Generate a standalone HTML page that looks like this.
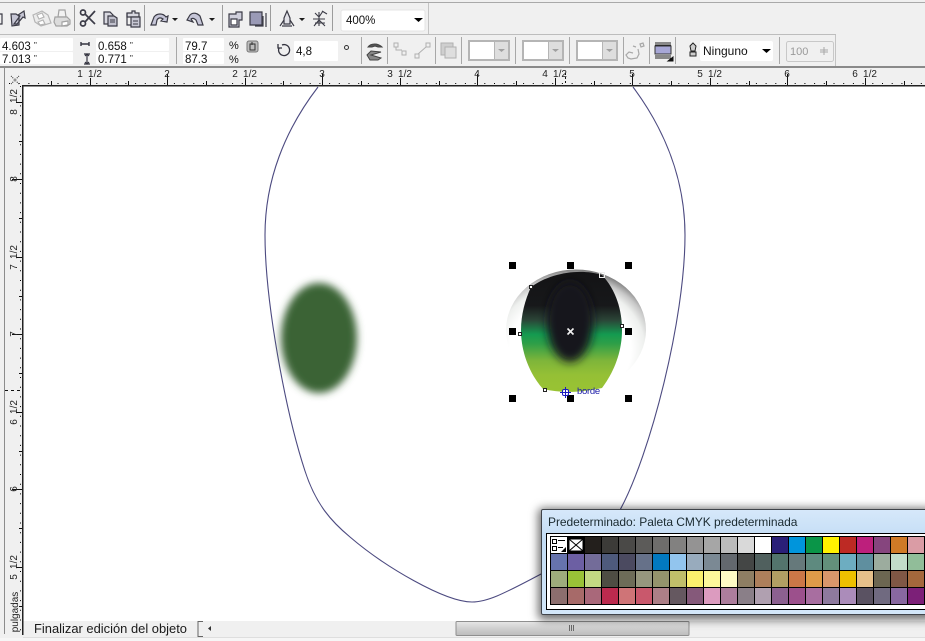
<!DOCTYPE html>
<html><head><meta charset="utf-8">
<style>
html,body{margin:0;padding:0;background:#f0f0f0}
#w{position:relative;width:925px;height:641px;overflow:hidden;background:#f0f0f0;font-family:"Liberation Sans",sans-serif}
svg{position:absolute;left:0;top:0}
#pal{position:absolute;left:541px;top:509px;width:390px;height:106px;border:1px solid #40444a;box-sizing:border-box;background:linear-gradient(#d6e8fa,#c2dcf5 30%,#d3e7f9);box-shadow:0 2px 9px 3px rgba(0,0,0,.55);border-radius:2px}
#title{position:absolute;left:6px;top:5px;font-size:12px;color:#1a2a30;white-space:nowrap;letter-spacing:-.05px}
#box{position:absolute;left:4px;top:23px;width:400px;height:77px;background:#fff;border:1px solid #000;box-sizing:border-box}
#grid{position:absolute;left:3px;top:2px;display:grid;grid-template-columns:repeat(22,16px);grid-auto-rows:16px;gap:1px;background:#000;padding:1px;width:400px}
#grid i{display:block;position:relative}
</style></head><body><div id="w">
<svg width="925" height="641" viewBox="0 0 925 641" font-family="Liberation Sans, sans-serif">
<defs>
<filter id="b3" x="-30%" y="-30%" width="160%" height="160%"><feGaussianBlur stdDeviation="4"/></filter>
<filter id="b5" x="-50%" y="-50%" width="200%" height="200%"><feGaussianBlur stdDeviation="4.500"/></filter>
<radialGradient id="scl" cx=".46" cy=".66" r=".7"><stop offset="0" stop-color="#fff"/><stop offset=".62" stop-color="#fff"/><stop offset=".76" stop-color="#eef0ee"/><stop offset=".85" stop-color="#c8c8c8"/><stop offset=".94" stop-color="#808080"/><stop offset="1" stop-color="#444"/></radialGradient>
<linearGradient id="iris" x1="0" y1="0" x2="0" y2="1"><stop offset="0" stop-color="#131315"/><stop offset=".28" stop-color="#17181a"/><stop offset=".4" stop-color="#2b4437"/><stop offset=".52" stop-color="#149a50"/><stop offset=".6" stop-color="#2f9f48"/><stop offset=".74" stop-color="#7eb53a"/><stop offset=".86" stop-color="#95c035"/><stop offset="1" stop-color="#99c333"/></linearGradient>
<linearGradient id="thumb" x1="0" y1="0" x2="0" y2="1"><stop offset="0" stop-color="#e6e6e6"/><stop offset=".5" stop-color="#cfcfcf"/><stop offset="1" stop-color="#bcbcbc"/></linearGradient>
</defs>

<!-- top bars -->
<rect x="0" y="2" width="925" height="1" fill="#a9a9a9"/>
<rect x="0" y="34" width="836" height="1" fill="#bdbdbd"/>
<rect x="428" y="3" width="1" height="31" fill="#c4c4c4"/>
<rect x="835" y="35" width="1" height="31" fill="#c4c4c4"/>
<rect x="0" y="66" width="925" height="2" fill="#8a8a8a"/>

<!-- toolbar 1 separators -->
<g fill="#9c9c9c"><rect x="74" y="5" width="1" height="26"/><rect x="144" y="5" width="1" height="26"/><rect x="222" y="5" width="1" height="26"/><rect x="270" y="5" width="1" height="26"/><rect x="332" y="5" width="1" height="26"/></g>

<!-- toolbar 1 icons -->
<g fill="none" stroke="#3b3b46" stroke-width="1.200">
<path d="M0 14h2v10H0"/>
<path d="M11 14l5 0 3 2 0 9-7 1zM14 24l6-8-2-1 6-4 1 7-2-1-6 7z" fill="#c6c6d4"/>
<g stroke="#b5b5b5" fill="#ececec"><path d="M33 15l9-4 6 4 3 8-10 3-6-4z"/><path d="M37 15l5-2 2 4-5 2zM38 22l5-2 2 4-5 1z" fill="#fff"/></g>
<g stroke="#a2a2a2" fill="#dcdcdc"><path d="M59 10h6l1 7h-8z" fill="#f2f2f2"/><path d="M55 17h12l3 3v4l-3 2-11 0-2-4z"/><path d="M62 22l6-1v4l-6 1z" fill="#fff"/></g>
<g stroke="#3c3c48" stroke-width="1.700"><path d="M85 14l10 10M85 22l10-11"/><circle cx="83" cy="12.500" r="2.500"/><circle cx="83" cy="23.500" r="2.500"/></g>
<path d="M104 12h6l3 3v9h-9z" fill="#d8d8e0"/><path d="M108 16h6l3 2v8h-9z" fill="#c0c0cc"/><path d="M110 20h5M110 22h5" stroke-width="1"/>
<path d="M127 13h5v-2h3v2h4v4h-12z" fill="#d8d8e0"/><path d="M127 13v12h5"/><path d="M131 17h9v10h-9z" fill="#c8c8d4"/><path d="M133 21h5M133 24h5" stroke-width="1"/>
<path d="M151 25L154 17C157 13 163 13 166 17L168 16L167 22L161 21L163 19C160 17 158 18 157 20L156 25Z" fill="#c6c6d8"/>
<path d="M187 20L190 15C193 12 197 13 200 16L203 25L198 25L196 20C194 18 192 18 191 19L193 22Z" fill="#c6c6d8"/>
<path d="M229 14h7v-2h6v8h-3v7h-10z" fill="#cfcfdc"/><path d="M231 19h6v6h-6z" fill="#fff"/>
<path d="M250 12h12v13h-12z" fill="#9a9ab6"/><path d="M263 16v10h-8M266 13l0 14"/>
<path d="M284 24l0-6 3-7 3 7 0 6zM280 26l4-6M294 26l-4-6M282 26h10" fill="#e2e2e8"/>
<path d="M315 13l4 4 4-6M313 19h12M319 12v14M314 26l5-6 6 6M322 11l5 3M315 23h10" stroke-width="1.100"/>
</g>
<g fill="#1c1c1c"><path d="M172 18h6l-3 3zM209 18h6l-3 3zM299 18h6l-3 3z"/></g>

<!-- zoom combo -->
<rect x="341" y="10" width="84" height="21" rx="2" fill="#fff" stroke="#e4e4e4"/>
<text x="346" y="24" font-size="11.500" fill="#111">400%</text>
<path d="M414 18h9l-4.500 4z" fill="#000"/>

<!-- toolbar 2 fields -->
<g fill="#fff"><rect x="0" y="38" width="73" height="13" rx="1"/><rect x="0" y="52" width="73" height="12" rx="1"/><rect x="96" y="38" width="73" height="13" rx="1"/><rect x="96" y="52" width="73" height="12" rx="1"/><rect x="183" y="38" width="41" height="13" rx="1"/><rect x="183" y="52" width="41" height="12" rx="1"/><rect x="294" y="41" width="44" height="20" rx="1"/><rect x="700" y="41" width="73" height="20" rx="2"/></g>
<g font-size="11.500" fill="#111">
<text x="2" y="50">4.603 <tspan font-size="8" dy="-2">"</tspan></text>
<text x="2" y="63">7.013 <tspan font-size="8" dy="-2">"</tspan></text>
<text x="98" y="50">0.658 <tspan font-size="8" dy="-2">"</tspan></text>
<text x="98" y="63">0.771 <tspan font-size="8" dy="-2">"</tspan></text>
<text x="185" y="50">79.7</text><text x="185" y="63">87.3</text>
<text x="229" y="49" font-size="11">%</text><text x="229" y="63" font-size="11">%</text>
<text x="296" y="55">4,8</text>
<text x="703" y="55" font-size="12">Ninguno</text>
</g>
<circle cx="346.500" cy="47.500" r="2" fill="none" stroke="#333"/>
<path d="M762 49h9l-4.500 4z" fill="#000"/>
<g fill="#a8a8a8"><rect x="176" y="37" width="1" height="27"/><rect x="361" y="37" width="1" height="27"/><rect x="387" y="37" width="1" height="27"/><rect x="435" y="37" width="1" height="27"/><rect x="461" y="37" width="1" height="27"/><rect x="515" y="37" width="1" height="27"/><rect x="569" y="37" width="1" height="27"/><rect x="623" y="37" width="1" height="27"/><rect x="649" y="37" width="1" height="27"/><rect x="675" y="37" width="1" height="27"/><rect x="779" y="37" width="1" height="27"/></g>

<!-- toolbar 2 icons -->
<g fill="none" stroke="#33333f" stroke-width="1">
<path d="M81 44h8M81 42v4M89 42v4" stroke-width="1.400"/>
<path d="M87 54v10M84 54h6M84 64h6M85 56l2-2 2 2M85 62l2 2 2-2" stroke-width="1.200"/>
<rect x="247" y="41" width="11" height="11" rx="2" fill="#bdbdbd" stroke="#777"/><path d="M250 44h5v6h-5zM252 42v3" stroke="#333"/>
<path d="M279 48a5.500 5.500 0 1 0 3-3M278 44v4h4" stroke-width="1.300"/>
<path d="M368 47c3-4 10-4 14 0l-4 0-3-1-3 1z" fill="#555" stroke="#444"/><path d="M381 52l-10 3 10 3-3 2h-8l-3-5 4-4z" fill="#888" stroke="#444"/>
<g stroke="#b0b0b0"><rect x="394" y="43" width="4" height="4"/><rect x="402" y="51" width="4" height="4"/><path d="M396 47v3h6"/><rect x="415" y="54" width="4" height="4"/><rect x="426" y="43" width="4" height="4"/><path d="M418 54l8-7"/></g>
<rect x="441" y="43" width="12" height="12" fill="#cfcfcf" stroke="#b0b0b0"/><rect x="445" y="47" width="11" height="11" fill="#dedede" stroke="#b0b0b0"/>
<path d="M633 53l-4-1-3 3 2 3 3 1 6-1 2-4-1-5M633 46l3 1M640 44l3-1 1 3-3 1z" stroke="#a8a8a8" stroke-width="1.200"/>
<path d="M655 43h16M655 45h16" stroke="#222"/><rect x="655" y="46" width="16" height="8" fill="#a7a7d6" stroke="#333"/><path d="M655 56h16M655 58h16" stroke="#222"/><path d="M668 61l5-4v4z" fill="#111" stroke="#111"/>
<path d="M690 46l3-3 3 3-1 5-4 0zM690 52h6v4h-6z" stroke="#222" fill="#ccc"/>
</g>

<!-- colour selectors -->
<g>
<rect x="468" y="40" width="42" height="21" fill="#b5b5b5"/><rect x="470" y="42" width="24" height="17" fill="#fff"/><rect x="495" y="42" width="13" height="17" fill="#dedede"/><path d="M498 49h7l-3.500 3z" fill="#a0a0a0"/>
<rect x="522" y="40" width="42" height="21" fill="#b5b5b5"/><rect x="524" y="42" width="24" height="17" fill="#fff"/><rect x="549" y="42" width="13" height="17" fill="#dedede"/><path d="M552 49h7l-3.500 3z" fill="#a0a0a0"/>
<rect x="576" y="40" width="42" height="21" fill="#b5b5b5"/><rect x="578" y="42" width="24" height="17" fill="#fff"/><rect x="603" y="42" width="13" height="17" fill="#dedede"/><path d="M606 49h7l-3.500 3z" fill="#a0a0a0"/>
</g>
<rect x="786.500" y="41.500" width="47" height="20" rx="2" fill="#f0f0f0" stroke="#c8c8c8"/>
<text x="790" y="55" font-size="11" fill="#9a9a9a">100</text>
<path d="M820 50h8M824 47v8M820 52h8" stroke="#a8a8a8" fill="none"/>

<!-- ruler H -->
<rect x="23" y="68" width="902" height="17" fill="#f0f0f0"/>
<rect x="4" y="68" width="1" height="566" fill="#8c8c8c"/>
<path d="M8 84.500H925" stroke="#000" stroke-width="1" stroke-dasharray="1 8.700" stroke-dashoffset="-1" transform="translate(0,-1)"/>
<g stroke="#111" stroke-width="1" fill="none">
<path d="M90.500 78v7M167.500 74v11M245.500 78v7M322.500 74v11M400.500 78v7M477.500 74v11M555.500 78v7M632.500 74v11M710.500 78v7M787.500 74v11M865.500 78v7"/>
<path d="M51.500 81v4M128.500 81v4M206.500 81v4M283.500 81v4M361.500 81v4M439.500 81v4M516.500 81v4M594.500 81v4M671.500 81v4M749.500 81v4M826.500 81v4M904.500 81v4"/>
<path d="M565.500 73v12" stroke-dasharray="2 2"/>
</g>
<g font-size="10" fill="#222" text-anchor="middle">
<text x="80" y="77">1</text><text x="95" y="77">1/2</text>
<text x="167" y="77">2</text>
<text x="235" y="77">2</text><text x="250" y="77">1/2</text>
<text x="322" y="77">3</text>
<text x="390" y="77">3</text><text x="405" y="77">1/2</text>
<text x="477" y="77">4</text>
<text x="545" y="77">4</text><text x="560" y="77">1/2</text>
<text x="632" y="77">5</text>
<text x="700" y="77">5</text><text x="715" y="77">1/2</text>
<text x="787" y="77">6</text>
<text x="855" y="77">6</text><text x="870" y="77">1/2</text>
</g>
<!-- origin icon -->
<path d="M11 76l4 4M19 76l-4 4M11 84l4-4M19 84l-4-4" stroke="#333" stroke-dasharray="1 1" fill="none"/>

<!-- ruler V -->
<path d="M20.500 86V634" stroke="#000" stroke-dasharray="1 8.700" fill="none"/>
<g stroke="#111" fill="none">
<path d="M16 102.500h7M12 179.500h11M16 257.500h7M12 334.500h11M16 412.500h7M12 489.500h11M16 567.500h7"/>
<path d="M19 141.500h4M19 218.500h4M19 296.500h4M19 373.500h4M19 451.500h4M19 528.500h4M19 606.500h4"/>
<path d="M5 390.500h18" stroke-dasharray="3 3"/>
</g>
<g font-size="10" fill="#222" text-anchor="middle">
<text transform="translate(17,96) rotate(-90)">1/2</text><text transform="translate(17,112) rotate(-90)">8</text>
<text transform="translate(17,179) rotate(-90)">8</text>
<text transform="translate(17,252) rotate(-90)">1/2</text><text transform="translate(17,267) rotate(-90)">7</text>
<text transform="translate(17,334) rotate(-90)">7</text>
<text transform="translate(17,407) rotate(-90)">1/2</text><text transform="translate(17,422) rotate(-90)">6</text>
<text transform="translate(17,489) rotate(-90)">6</text>
<text transform="translate(17,562) rotate(-90)">1/2</text><text transform="translate(17,577) rotate(-90)">5</text>
<text transform="translate(18,612) rotate(-90)" font-size="10">pulgadas</text>
</g>

<!-- canvas -->
<rect x="23" y="86" width="902" height="535" fill="#fff"/>
<rect x="22" y="85" width="903" height="1.500" fill="#222"/>
<rect x="22" y="85" width="1.500" height="550" fill="#222"/>

<!-- face -->
<g fill="none" stroke="#4c4a80" stroke-width="1.100">
<path d="M318 87C285 130 265 180 265 235C265 300 285 410 305 471C316 505 332 522 350 537C385 567 445 602 472 602C490 602 510 590 545 572"/>
<path d="M620 510C650 455 685 320 685 235C685 180 665 130 633 87"/>
</g>

<!-- left oval -->
<ellipse cx="319" cy="338" rx="38" ry="55" fill="#3b6336" filter="url(#b3)"/>

<!-- eye -->
<ellipse cx="576" cy="330" rx="70" ry="60.500" fill="url(#scl)"/>
<path d="M531 287C550 273 580 268 602 275C616 290 622 310 622 330C622 352 614 372 602 388C580 393 560 393 543 389C528 372 521 350 521 330C521 315 525 300 531 287Z" fill="url(#iris)"/>
<ellipse cx="570" cy="322" rx="23" ry="40" fill="#19191b" filter="url(#b5)"/>

<!-- handles -->
<g fill="#000"><rect x="509" y="262" width="7" height="7"/><rect x="567" y="262" width="7" height="7"/><rect x="625" y="262" width="7" height="7"/><rect x="509" y="328" width="7" height="7"/><rect x="625" y="328" width="7" height="7"/><rect x="509" y="395" width="7" height="7"/><rect x="567" y="395" width="7" height="7"/><rect x="625" y="395" width="7" height="7"/></g>
<path d="M567.500 328.500l6 6M573.500 328.500l-6 6" stroke="#f0f0f0" stroke-width="1.600" fill="none"/>
<g fill="#fff" stroke="#222"><rect x="529.500" y="285.500" width="3" height="3"/><rect x="518.500" y="332.500" width="3" height="3"/><rect x="620.500" y="324.500" width="3" height="3"/><rect x="543.500" y="388.500" width="3" height="3"/></g>
<rect x="599.500" y="272.500" width="5" height="5" fill="none" stroke="#eee" stroke-width="1"/>
<!-- cursor -->
<g fill="none" stroke="#1a1ac0"><rect x="562.500" y="389.500" width="6" height="6" rx="1.500" fill="#fff"/><path d="M565.500 387v11M560 392.500h11"/></g>
<text x="577" y="394" font-size="9.500" fill="#1a1aa8" letter-spacing="-.3">borde</text>

<!-- status bar -->
<rect x="24" y="621" width="901" height="17" fill="#f0f0f0"/>
<text x="34" y="633" font-size="12.500" fill="#1a1a1a" textLength="153" lengthAdjust="spacingAndGlyphs">Finalizar edición del objeto</text>
<path d="M203 621.500h-5v15h5" fill="none" stroke="#666"/>
<path d="M211 626v5l-3-2.500z" fill="#333"/>
<rect x="456" y="621.500" width="233" height="14" rx="1" fill="url(#thumb)" stroke="#8f8f8f"/>
<path d="M569.500 625v6M571.500 625v6M573.500 625v6" stroke="#6a6a6a"/>
<rect x="0" y="638" width="925" height="3" fill="#f6f6f6"/>
<rect x="23" y="637" width="902" height="1" fill="#dedede"/>
</svg>

<div id="pal"><div id="title">Predeterminado: Paleta CMYK predeterminada</div>
<div id="box"><div id="grid">
<i style="background:#fff"><svg width="16" height="16" viewBox="0 0 16 16"><g fill="none" stroke="#000"><rect x="1.500" y="2.500" width="4" height="4"/><rect x="1.500" y="9.500" width="4" height="4"/><path d="M7 3.500h7M7 10.500h5"/></g><path d="M10 15l5-5v5z"/></svg></i>
<i style="background:#000"><svg width="16" height="16" viewBox="0 0 16 16"><rect x="1" y="2" width="14" height="12" fill="#fff"/><path d="M1 2l14 12M15 2L1 14M1 2h14v12H1z" stroke="#000" fill="none"/></svg></i>
<i style="background:#231f1c"></i><i style="background:#3c3b38"></i><i style="background:#4a4947"></i><i style="background:#5c5b59"></i><i style="background:#6e6d6b"></i><i style="background:#828180"></i><i style="background:#949393"></i><i style="background:#a6a6a6"></i><i style="background:#bbbbbb"></i><i style="background:#d9d9d9"></i><i style="background:#ffffff"></i><i style="background:#2a1f78"></i><i style="background:#0095dc"></i><i style="background:#0a9548"></i><i style="background:#fff200"></i><i style="background:#bd2a24"></i><i style="background:#bd1f7c"></i><i style="background:#86457e"></i><i style="background:#d07a26"></i><i style="background:#da9ca5"></i>
<i style="background:#6673ad"></i><i style="background:#6c5fa3"></i><i style="background:#736c99"></i><i style="background:#4e5a7c"></i><i style="background:#4b4a60"></i><i style="background:#667189"></i><i style="background:#0279c0"></i><i style="background:#92c5ee"></i><i style="background:#98abbd"></i><i style="background:#7b8994"></i><i style="background:#63686e"></i><i style="background:#444645"></i><i style="background:#50605e"></i><i style="background:#53746c"></i><i style="background:#66797b"></i><i style="background:#5e8a7f"></i><i style="background:#63907b"></i><i style="background:#6dadc1"></i><i style="background:#5f8f9f"></i><i style="background:#9cac9e"></i><i style="background:#c2dcc9"></i><i style="background:#91bd99"></i>
<i style="background:#9eac7c"></i><i style="background:#99c237"></i><i style="background:#c3d983"></i><i style="background:#4e4d43"></i><i style="background:#6d6c58"></i><i style="background:#96977e"></i><i style="background:#94946c"></i><i style="background:#c0bf6a"></i><i style="background:#fbf06d"></i><i style="background:#fdf79a"></i><i style="background:#fefbc4"></i><i style="background:#8e7e63"></i><i style="background:#ad7f5b"></i><i style="background:#b29e63"></i><i style="background:#cb7747"></i><i style="background:#de9b49"></i><i style="background:#d9976b"></i><i style="background:#eec000"></i><i style="background:#e6c08a"></i><i style="background:#6c6651"></i><i style="background:#7f5745"></i><i style="background:#a4683c"></i>
<i style="background:#8c6e6e"></i><i style="background:#a76a69"></i><i style="background:#a9687a"></i><i style="background:#bc2a4e"></i><i style="background:#cf7477"></i><i style="background:#c9586c"></i><i style="background:#ac7f87"></i><i style="background:#655860"></i><i style="background:#85597a"></i><i style="background:#dc9bbf"></i><i style="background:#ac7d9c"></i><i style="background:#8a7f88"></i><i style="background:#b0a0b0"></i><i style="background:#8c6090"></i><i style="background:#9c508c"></i><i style="background:#a86ea0"></i><i style="background:#8e7a9e"></i><i style="background:#ab8cba"></i><i style="background:#5a5262"></i><i style="background:#706a80"></i><i style="background:#8868a0"></i><i style="background:#7c2078"></i>
</div></div></div>
</div></body></html>
